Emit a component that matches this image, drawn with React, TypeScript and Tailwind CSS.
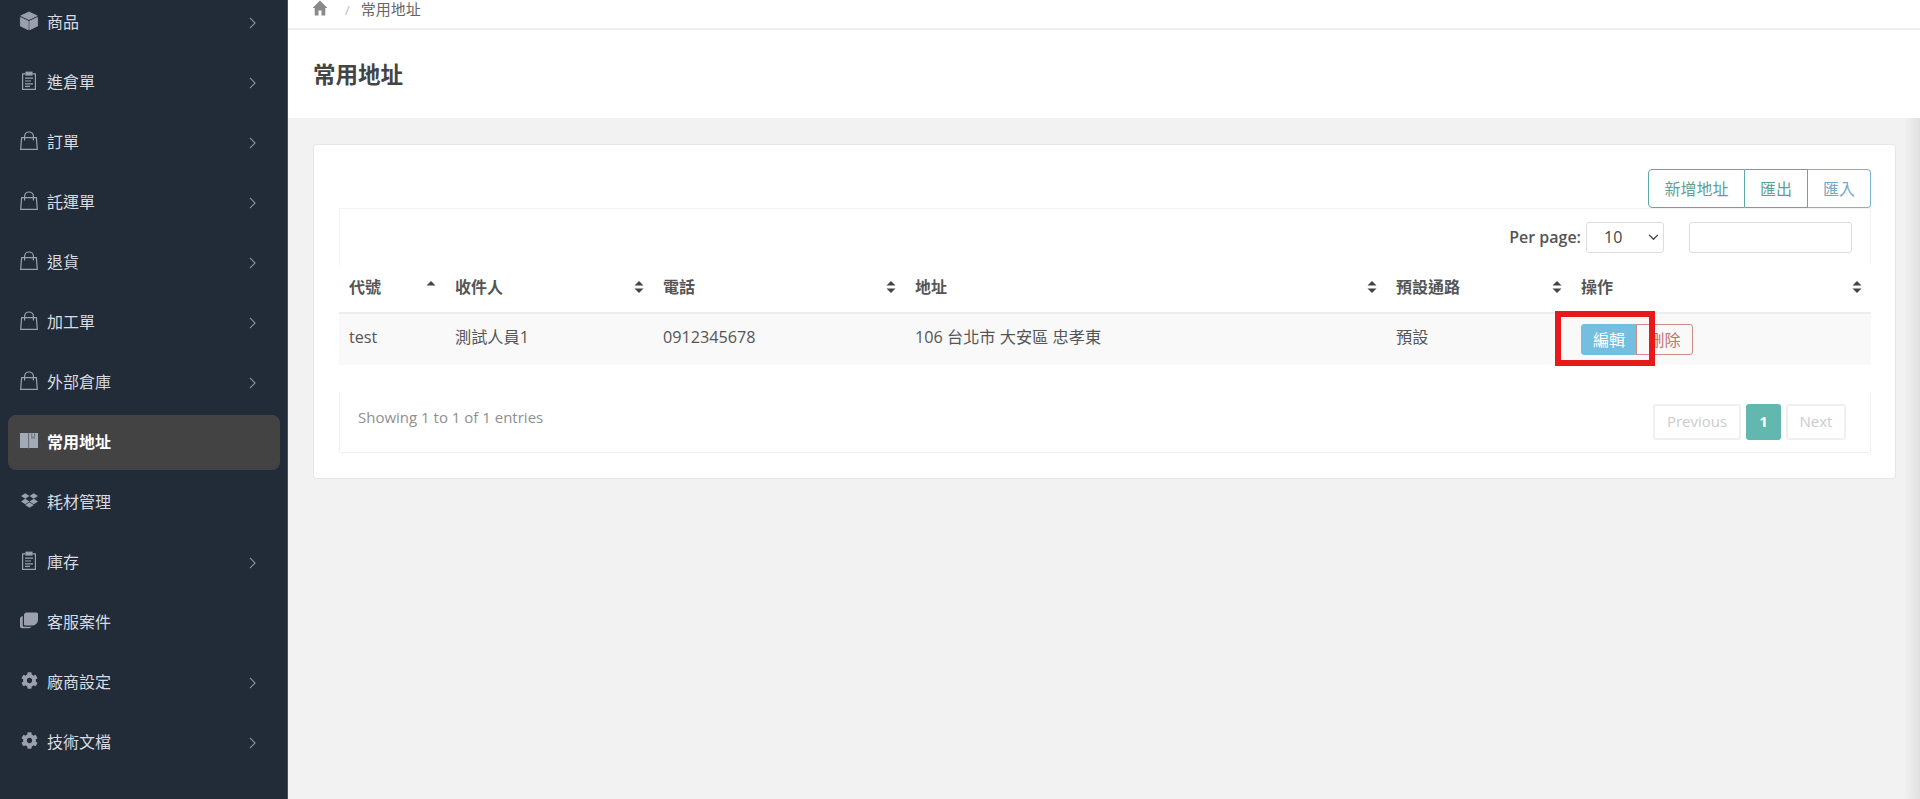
import { FaCog, FaDropbox } from 'react-icons/fa';

const font = "font-['Open_Sans','Noto_Sans_CJK_TC',sans-serif]";

function CubeIcon() {
  return (
    <svg viewBox="0 0 20 20" className="w-[20px] h-[20px]" fill="currentColor" stroke="currentColor" strokeWidth="0.8" strokeLinejoin="round">
      <path d="M10 1 18.200 4.800 10 8.600 1.800 4.800Z" />
      <path d="M1.400 6.400 9.300 10v8.800L1.400 15Z" />
      <path d="M18.600 6.400 10.700 10v8.800l7.900-3.800Z" />
    </svg>
  );
}

function ClipboardIcon() {
  return (
    <svg viewBox="0 0 20 20" className="w-[20px] h-[20px]" fill="none" stroke="currentColor" strokeWidth="1.2">
      <path d="M6.500 2.800H3.600v15.600h12.800V2.800h-2.900" />
      <rect x="7" y="1.200" width="6" height="2.800" fill="currentColor" />
      <path d="M6 7.200h8M6 10h6M6 12.800h8M6 15.400h5" />
    </svg>
  );
}

function BagIcon() {
  return (
    <svg viewBox="0 0 20 20" className="w-[20px] h-[20px]" fill="none" stroke="currentColor" strokeWidth="1.2">
      <path d="M2.600 6.600h14.800l.9 11.800H1.700Z" />
      <path d="M5.600 9.400V5.400a4.400 4.400 0 0 1 8.800 0v4" />
    </svg>
  );
}

function BookIcon() {
  return (
    <svg viewBox="0 0 20 20" className="w-[20px] h-[20px]">
      <path d="M1 2h18v15H1Z" fill="currentColor" />
      <path d="M9.600 2v16.400" stroke="#5d626b" strokeWidth="0.9" />
      <path d="M12.800 2.400v5l1.400-1 1.400 1v-5" fill="none" stroke="#5d626b" strokeWidth="0.8" />
    </svg>
  );
}

function ChatIcon() {
  return (
    <svg viewBox="0 0 20 20" className="w-[20px] h-[20px]" fill="currentColor">
      <path d="M7.500 1.500h10A1.500 1.500 0 0 1 19 3v5.500c0 3.600-2.500 6-6 6H6a1 1 0 0 1-1-1V4c0-1.500 1-2.500 2.500-2.500Z" />
      <path d="M3.800 5v9.600c0 .7.500 1.200 1.200 1.200h7.500c-.7 1-1.500 1.400-2.700 1.400H3c-1.200 0-2-.8-2-2V8c0-1.500 1-2.600 2.800-3Z" />
    </svg>
  );
}

function HomeIcon() {
  return (
    <svg viewBox="0 0 16 16" className="w-[16px] h-[16px] fill-[#8a8a8a] -mt-[13px]">
      <path d="M8 .5.500 8h2.200v7.500h3.800v-5h3v5h3.800V8h2.200Z" />
    </svg>
  );
}

function SortIcon({ up }: { up?: boolean }) {
  return (
    <svg viewBox="0 0 10 14" className="w-[10px] h-[14px] fill-[#444]">
      <path d="M5 1 9.500 5.500H.5Z" />
      {!up && <path d="M5 13 .5 8.500h9Z" />}
    </svg>
  );
}

const menu = [
  { label: '商品', icon: <CubeIcon />, arrow: true },
  { label: '進倉單', icon: <ClipboardIcon />, arrow: true },
  { label: '訂單', icon: <BagIcon />, arrow: true },
  { label: '託運單', icon: <BagIcon />, arrow: true },
  { label: '退貨', icon: <BagIcon />, arrow: true },
  { label: '加工單', icon: <BagIcon />, arrow: true },
  { label: '外部倉庫', icon: <BagIcon />, arrow: true },
  { label: '常用地址', icon: <BookIcon />, active: true },
  { label: '耗材管理', icon: <FaDropbox className="w-[17px] h-[17px]" /> },
  { label: '庫存', icon: <ClipboardIcon />, arrow: true },
  { label: '客服案件', icon: <ChatIcon /> },
  { label: '廠商設定', icon: <FaCog className="w-[17px] h-[17px]" />, arrow: true },
  { label: '技術文檔', icon: <FaCog className="w-[17px] h-[17px]" />, arrow: true },
];

const columns = [
  { label: '代號', width: 'w-[106px]', up: true },
  { label: '收件人', width: 'w-[208px]' },
  { label: '電話', width: 'w-[252px]' },
  { label: '地址', width: 'w-[481px]' },
  { label: '預設通路', width: 'w-[185px]' },
  { label: '操作', width: 'w-[300px]' },
];

function Sidebar() {
  return (
    <aside className="w-[288px] shrink-0 h-[799px] overflow-hidden bg-[#222b38] border-r border-[#4a5260]">
      <ul className="flex flex-col pl-[8px] pr-[7px] -mt-[8px]">
        {menu.map((item) => (
          <li
            key={item.label}
            className={`h-[60px] flex items-center pl-[11px] pr-[24px] shrink-0 ${
              item.active ? 'relative' : ''
            }`}
          >
            {item.active && <div className="absolute inset-x-0 top-[3px] bottom-[2px] rounded-[8px] bg-[#434343]" />}
            <span className={`relative w-[20px] flex justify-center -mt-[3px] ${item.active ? 'text-[#a3a9b5]' : 'text-[#9aa1ad]'}`}>
              {item.icon}
            </span>
            <span className={`relative ml-[8px] text-[16px] ${item.active ? 'font-bold text-white' : 'text-[#d8dbe0]'}`}>
              {item.label}
            </span>
            {item.arrow && (
              <svg viewBox="0 0 8 14" className="relative ml-auto mt-[2px] w-[7px] h-[12px]" fill="none" stroke="#8b919c" strokeWidth="1.300">
                <path d="M1 1l6 6-6 6" />
              </svg>
            )}
          </li>
        ))}
      </ul>
    </aside>
  );
}

export default function App() {
  return (
    <div className={`${font} flex w-[1920px] h-[799px] overflow-hidden bg-[#f2f2f2] text-[#555]`}>
      <Sidebar />
      <main className="flex-1 min-w-0">
        <div className="h-[30px] bg-white border-b-2 border-[#eeeeee] pl-[24px] flex items-center text-[15px] text-[#666]">
          <HomeIcon />
          <span className="text-[#bbb] text-[13px] ml-[17px] -mt-[7px]">/</span>
          <span className="ml-[11px] -mt-[10px]">常用地址</span>
        </div>
        <div className="h-[88px] bg-white pl-[25px] pt-[2px] flex items-center">
          <h1 className="text-[22.500px] font-bold text-[#444]">常用地址</h1>
        </div>
        <div className="ml-[25px] mt-[26px] w-[1583px] h-[335px] bg-white border border-[#e6e6e6] rounded-[3px] pl-[25px] pr-[24px] pt-[24px]">
          <div className="flex justify-end">
            <div className="flex h-[39px] text-[16px]">
              <button className="w-[97px] border border-[#5da9a3] rounded-l-[4px] text-[#5f9f98]">新增地址</button>
              <button className="w-[63px] border border-l-0 border-[#5da9a3] text-[#5f9f98]">匯出</button>
              <button className="w-[63px] border border-l-0 border-[#7ab6d0] rounded-r-[4px] text-[#74a9c4]">匯入</button>
            </div>
          </div>
          <div className="h-[57px] border-t border-r border-l border-[#f3f3f3] flex items-center justify-end pr-[18px]">
            <span className="text-[16px] font-semibold text-[#555] mr-[5px]">Per page:</span>
            <div className="w-[78px] h-[31px] border border-[#dddddd] rounded-[3px] flex items-center justify-between pl-[17px] pr-[4px] text-[16px] text-[#444]">
              10
              <svg viewBox="0 0 12 8" className="w-[11px] h-[7px]" fill="none" stroke="#444" strokeWidth="1.600">
                <path d="M1 1l5 5 5-5" />
              </svg>
            </div>
            <input className="ml-[25px] w-[163px] h-[31px] border border-[#dddddd] rounded-[3px]" />
          </div>
          <table className="w-[1532px] table-fixed border-collapse">
            <thead>
              <tr className="h-[48px] border-b-2 border-[#eeeeee]">
                {columns.map((c) => (
                  <th key={c.label} className={`${c.width} p-0 pl-[10px] pr-[9px] pb-[4px] text-left`}>
                    <div className="flex items-center justify-between text-[16px] font-bold text-[#555]">
                      {c.label}
                      <SortIcon up={c.up} />
                    </div>
                  </th>
                ))}
              </tr>
            </thead>
            <tbody>
              <tr className="h-[52px] bg-[#f9f9f9] text-[16.200px] text-[#555]">
                <td className="pl-[10px] pb-[5px]">test</td>
                <td className="pl-[10px] pb-[5px]">測試人員1</td>
                <td className="pl-[10px] pb-[5px]">0912345678</td>
                <td className="pl-[10px] pb-[5px]">106 台北市 大安區 忠孝東</td>
                <td className="pl-[10px] pb-[5px]">預設</td>
                <td className="pl-[10px]">
                  <div className="flex text-[16px]">
                    <button className="w-[56px] h-[31px] bg-[#74bfe0] border border-[#74bfe0] rounded-l-[3px] text-white">編輯</button>
                    <button className="w-[57px] h-[31px] -ml-[1px] border border-[#d08a84] rounded-r-[3px] text-[#c4746c]">刪除</button>
                  </div>
                </td>
              </tr>
            </tbody>
          </table>
          <div className="mt-[27px] h-[61px] border-r border-b border-l border-[#f0f0f0] rounded-b-[2px] flex items-center justify-between pl-[18px] pr-[24px] text-[15px]">
            <span className="text-[#8f8f8f] -mt-[10px]">Showing 1 to 1 of 1 entries</span>
            <div className="flex gap-[5px] -mt-[1px]">
              <span className="w-[88px] h-[36px] border-2 border-[#f0f0f0] rounded-[3px] flex items-center justify-center text-[#ccc]">Previous</span>
              <span className="w-[35px] h-[36px] bg-[#62b8ae] rounded-[3px] flex items-center justify-center font-bold text-white">1</span>
              <span className="w-[60px] h-[36px] border-2 border-[#f0f0f0] rounded-[3px] flex items-center justify-center text-[#ccc]">Next</span>
            </div>
          </div>
        </div>
      </main>
      {/* soft shadow down the right edge of the content */}
      <div className="absolute right-0 top-[118px] w-[16px] h-[681px] bg-linear-to-r from-transparent to-[#e0e0e0]" />
      {/* annotation box on top of the edit button */}
      <div className="absolute left-[1555px] top-[311px] w-[100px] h-[55px] border-[6px] border-[#e8191c]" />
    </div>
  );
}
